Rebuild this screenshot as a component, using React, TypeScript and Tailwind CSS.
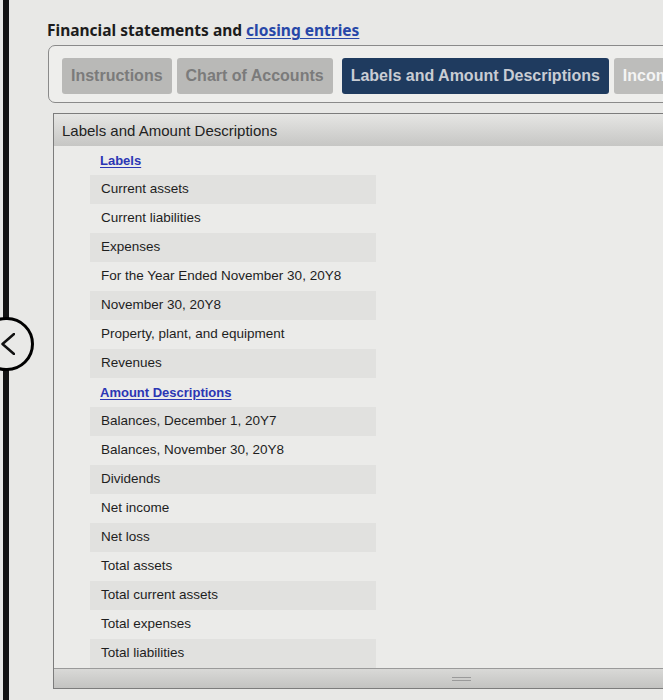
import React from "react"

const labels = [
  "Current assets",
  "Current liabilities",
  "Expenses",
  "For the Year Ended November 30, 20Y8",
  "November 30, 20Y8",
  "Property, plant, and equipment",
  "Revenues",
]

const amounts = [
  "Balances, December 1, 20Y7",
  "Balances, November 30, 20Y8",
  "Dividends",
  "Net income",
  "Net loss",
  "Total assets",
  "Total current assets",
  "Total expenses",
  "Total liabilities",
]

function Heading({ text }: { text: string }) {
  return (
    <div className="flex h-[29px] items-center pl-[10px]">
      <span className="text-[13px] font-bold text-[#2b36b4] underline underline-offset-2">{text}</span>
    </div>
  )
}

function Row({ text, shaded }: { text: string; shaded: boolean }) {
  return (
    <div className={`flex h-[29px] items-center pl-[11px] ${shaded ? "bg-[#e1e1df]" : ""}`}>
      <span className="text-[13.5px] text-[#1e1e1e]">{text}</span>
    </div>
  )
}

export default function App() {
  const tabs = [
    { label: "Instructions", cls: "bg-[#b9b9b7] text-[#7b7b7b]" },
    { label: "Chart of Accounts", cls: "bg-[#b9b9b7] text-[#7b7b7b]" },
    { label: "Labels and Amount Descriptions", cls: "ml-[4px] bg-[#1f3b5f] text-[#c9cdd4]" },
    { label: "Income Statement", cls: "bg-[#bdbdbb] text-[#f4f4f4]" },
  ]

  return (
    <div
      className="relative flex h-[700px] w-[663px] overflow-hidden bg-[#e8e8e6]"
      style={{ fontFamily: '"Liberation Sans", Arial, sans-serif' }}
    >
      {/* left rail */}
      <div className="ml-[3px] w-[6px] shrink-0 bg-[#141414]" />
      <div className="absolute left-[-21px] top-[317px] flex h-[54px] w-[55px] items-center justify-end rounded-full border-[3px] border-black bg-[#e9e9e7] pr-[16px]">
        <svg width="14" height="22" viewBox="0 0 14 22" fill="none">
          <path d="M13 1 L1.5 11 L13 21" stroke="#111" strokeWidth="2.5" strokeLinecap="round" strokeLinejoin="round" />
        </svg>
      </div>

      <main className="flex w-[830px] shrink-0 flex-col pl-[38px] pt-[20px]">
        <h1
          className="h-[20px] text-[15.5px] font-bold leading-[20px] text-[#1c1c1c]"
          style={{ fontFamily: '"Noto Sans", "Open Sans", sans-serif' }}
        >
          Financial statements and{" "}
          <span className="text-[#2747a8] underline underline-offset-2">closing entries</span>
        </h1>

        {/* tab bar */}
        <div className="ml-[1px] mt-[5px] flex h-[58px] gap-[5px] rounded-[7px] border border-[#8a8a8a] bg-[#eeeeec] pl-[13px] pt-[12px]">
          {tabs.map((t) => (
            <div
              key={t.label}
              className={`flex h-[36px] shrink-0 items-center rounded-[3px] px-[9px] text-[16px] font-bold ${t.cls}`}
            >
              {t.label}
            </div>
          ))}
        </div>

        {/* panel */}
        <section className="ml-[6px] mt-[10px] flex flex-col border border-[#7c7c7c] bg-[#ebebe9]">
          <div className="flex h-[32px] items-center bg-gradient-to-b from-[#e6e6e4] to-[#c6c6c4] pl-[8px] pt-[2px] text-[15px] text-[#222]">
            Labels and Amount Descriptions
          </div>
          <div className="ml-[36px] w-[286px]">
            <Heading text="Labels" />
            {labels.map((l, i) => (
              <Row key={l} text={l} shaded={i % 2 === 0} />
            ))}
            <Heading text="Amount Descriptions" />
            {amounts.map((a, i) => (
              <Row key={a} text={a} shaded={i % 2 === 0} />
            ))}
          </div>
          <div className="flex h-[20px] items-center border-t border-[#9a9a9a] bg-gradient-to-b from-[#d9d9d7] to-[#c3c3c1] pl-[398px]">
            <div className="flex w-[19px] flex-col gap-[2px]">
              <div className="h-[1px] bg-[#9a9a9a]" />
              <div className="h-[1px] bg-[#9a9a9a]" />
            </div>
          </div>
        </section>
      </main>
    </div>
  )
}
